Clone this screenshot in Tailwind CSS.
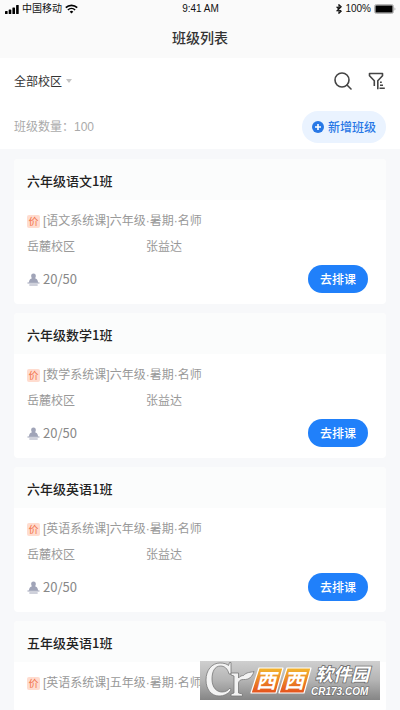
<!DOCTYPE html>
<html lang="zh-CN">
<head>
<meta charset="utf-8">
<meta name="viewport" content="width=device-width, initial-scale=1">
<title>班级列表</title>
<script src="https://cdn.jsdelivr.net/npm/@tailwindcss/browser@4"></script>
</head>
<body class="bg-white font-['Noto_Sans_CJK_SC',sans-serif] text-[#333] overflow-x-hidden">
<svg class="hidden" aria-hidden="true">
  <symbol id="seat" viewBox="0 0 14 14">
    <path d="M7 .6c1.800 0 2.700 1.300 2.500 2.900-.1 1-.5 1.700-.8 2.200 1.500.5 2.600 1.300 3.100 3.700l.3 1H1.900l.3-1c.5-2.400 1.600-3.200 3.100-3.700-.3-.5-.7-1.200-.8-2.200C4.300 1.900 5.200.6 7 .6z" fill="#a0a4b8"/>
    <path d="M.5 10.800h13M2.500 13h9" stroke="#a0a4b8" stroke-width="1.100" fill="none"/>
  </symbol>
</svg>

<header class="bg-[#fafafa]">
  <div class="grid h-[18px] grid-cols-3 items-center pl-[5px] pr-1 font-['Liberation_Sans','Noto_Sans_CJK_SC',sans-serif] text-[10px] leading-[18px] text-[#111]">
    <div class="flex items-center gap-[3px]">
      <svg class="h-[9px] w-[14px]" viewBox="0 0 14 9" fill="#000" aria-hidden="true"><rect y="6" width="2.600" height="3" rx=".6"/><rect x="3.700" y="4.500" width="2.600" height="4.500" rx=".6"/><rect x="7.400" y="2.500" width="2.600" height="6.500" rx=".6"/><rect x="11.100" width="2.600" height="9" rx=".6"/></svg>
      <span>中国移动</span>
      <svg class="h-[10px] w-[13px]" viewBox="0 0 13 10" fill="none" stroke="#000" aria-hidden="true"><path d="M.8 3.600a8.300 8.300 0 0 1 11.400 0" stroke-width="1.700"/><path d="M2.900 6a5.200 5.200 0 0 1 7.200 0" stroke-width="1.600"/><path d="M4.700 7.700a2.600 2.600 0 0 1 3.600 0L6.500 9.600z" fill="#000" stroke="none"/></svg>
    </div>
    <div class="text-center">9:41 AM</div>
    <div class="flex items-center justify-end gap-[3px]">
      <svg class="h-[10px] w-[6px]" viewBox="0 0 6 10" fill="none" stroke="#111" stroke-width="1.200" aria-hidden="true"><path d="M.6 2.700l4.600 4.500L3 9.200V.8l2.200 2L.6 7.300"/></svg>
      <span>100%</span>
      <svg class="h-[10px] w-[22px]" viewBox="0 0 22 10" aria-hidden="true"><rect x=".5" y=".5" width="19" height="9" rx="2" fill="#ddd" stroke="#b5b5b5"/><rect x="1.500" y="1.500" width="17" height="7" rx=".5" fill="#000"/><path d="M20.500 3.500c1.200.5 1.200 2.500 0 3z" fill="#aaa"/></svg>
    </div>
  </div>
  <h1 class="h-10 text-center text-[14px] font-medium leading-[38px]">班级列表</h1>
</header>

<section class="px-[14px]">
  <div class="flex h-[46px] items-center justify-between">
    <button type="button" class="flex items-center gap-1 text-[12px]">全部校区
      <svg class="h-1 w-[6px]" viewBox="0 0 6 4" aria-hidden="true"><path d="M0 0h6L3 4z" fill="#c4c4c4"/></svg>
    </button>
    <div class="flex items-center gap-4">
      <button type="button" aria-label="搜索"><svg class="size-[18px]" viewBox="0 0 18 18" fill="none" stroke="#444" stroke-width="1.600" stroke-linecap="round"><circle cx="8" cy="8" r="7"/><path d="M13 13l4 4"/></svg></button>
      <button type="button" aria-label="筛选"><svg class="size-[18px]" viewBox="0 0 18 18" fill="none" stroke="#444" stroke-width="1.600" stroke-linejoin="round"><path d="M6.300 14V8.800L1.500 3.700V1.500h13v2.200L9.800 8.800v8.400M12 10.300h1.800M12 13.200h3M11.500 16.300h5.300"/></svg></button>
    </div>
  </div>
  <div class="flex h-[45px] items-center justify-between">
    <p class="font-['Liberation_Sans','Noto_Sans_CJK_SC',sans-serif] text-[12px] text-[#aaa]">班级数量：100</p>
    <button type="button" class="flex h-8 items-center gap-1 rounded-full bg-[#eaf3ff] px-[10px] text-[12px] font-medium text-[#2878e6]">
      <svg class="size-3" viewBox="0 0 12 12" aria-hidden="true"><circle cx="6" cy="6" r="6" fill="#2878e6"/><path d="M6 3v6M3 6h6" stroke="#fff" stroke-width="1.600"/></svg>新增班级
    </button>
  </div>
</section>

<main class="h-[calc(100vh-149px)] overflow-hidden bg-[#f7f8fa] px-[14px] pt-[10px]">
  <div class="flex flex-col gap-[9px]">
    <article class="overflow-hidden rounded bg-white">
      <h2 class="h-[41px] bg-[#fbfcfc] px-[13px] text-[13px] font-medium leading-[44px] text-[#222]">六年级语文1班</h2>
      <div class="px-[13px] pb-[11px] pt-3 text-[12px] leading-[18px] text-[#999]">
        <p class="flex items-center gap-[3px] font-['Liberation_Sans','Noto_Sans_CJK_SC',sans-serif]"><span class="size-[13px] rounded-[2px] bg-[#ffdccf] text-center text-[10px] leading-[13px] text-[#f2734b]">价</span>[语文系统课]六年级·暑期·名师</p>
        <div class="mt-[7px] flex"><span class="w-[119px]">岳麓校区</span><span>张益达</span></div>
        <div class="mt-[10px] flex items-center justify-between"><span class="flex items-center gap-[3px] text-[13px] text-[#888]"><svg class="size-[13px]" aria-hidden="true"><use href="#seat"/></svg>20/50</span><button type="button" class="mr-[5px] h-7 rounded-full bg-[#2080fa] px-3 text-[12px] font-medium text-white">去排课</button></div>
      </div>
    </article>
    <article class="overflow-hidden rounded bg-white">
      <h2 class="h-[41px] bg-[#fbfcfc] px-[13px] text-[13px] font-medium leading-[44px] text-[#222]">六年级数学1班</h2>
      <div class="px-[13px] pb-[11px] pt-3 text-[12px] leading-[18px] text-[#999]">
        <p class="flex items-center gap-[3px] font-['Liberation_Sans','Noto_Sans_CJK_SC',sans-serif]"><span class="size-[13px] rounded-[2px] bg-[#ffdccf] text-center text-[10px] leading-[13px] text-[#f2734b]">价</span>[数学系统课]六年级·暑期·名师</p>
        <div class="mt-[7px] flex"><span class="w-[119px]">岳麓校区</span><span>张益达</span></div>
        <div class="mt-[10px] flex items-center justify-between"><span class="flex items-center gap-[3px] text-[13px] text-[#888]"><svg class="size-[13px]" aria-hidden="true"><use href="#seat"/></svg>20/50</span><button type="button" class="mr-[5px] h-7 rounded-full bg-[#2080fa] px-3 text-[12px] font-medium text-white">去排课</button></div>
      </div>
    </article>
    <article class="overflow-hidden rounded bg-white">
      <h2 class="h-[41px] bg-[#fbfcfc] px-[13px] text-[13px] font-medium leading-[44px] text-[#222]">六年级英语1班</h2>
      <div class="px-[13px] pb-[11px] pt-3 text-[12px] leading-[18px] text-[#999]">
        <p class="flex items-center gap-[3px] font-['Liberation_Sans','Noto_Sans_CJK_SC',sans-serif]"><span class="size-[13px] rounded-[2px] bg-[#ffdccf] text-center text-[10px] leading-[13px] text-[#f2734b]">价</span>[英语系统课]六年级·暑期·名师</p>
        <div class="mt-[7px] flex"><span class="w-[119px]">岳麓校区</span><span>张益达</span></div>
        <div class="mt-[10px] flex items-center justify-between"><span class="flex items-center gap-[3px] text-[13px] text-[#888]"><svg class="size-[13px]" aria-hidden="true"><use href="#seat"/></svg>20/50</span><button type="button" class="mr-[5px] h-7 rounded-full bg-[#2080fa] px-3 text-[12px] font-medium text-white">去排课</button></div>
      </div>
    </article>
    <article class="overflow-hidden rounded bg-white">
      <h2 class="h-[41px] bg-[#fbfcfc] px-[13px] text-[13px] font-medium leading-[44px] text-[#222]">五年级英语1班</h2>
      <div class="px-[13px] pb-5 pt-3 text-[12px] leading-[18px] text-[#999]">
        <p class="flex items-center gap-[3px] font-['Liberation_Sans','Noto_Sans_CJK_SC',sans-serif]"><span class="size-[13px] rounded-[2px] bg-[#ffdccf] text-center text-[10px] leading-[13px] text-[#f2734b]">价</span>[英语系统课]五年级·暑期·名师</p>
      </div>
    </article>
  </div>
</main>

<aside class="fixed bottom-[10px] right-5" aria-label="西西软件园">
  <svg class="block h-[39px] w-[180px]" viewBox="0 0 180 39">
    <defs>
      <linearGradient id="plate" x2="0" y2="1"><stop offset="0" stop-color="#cfcfcf"/><stop offset=".5" stop-color="#b4b4b4"/><stop offset="1" stop-color="#858585"/></linearGradient>
      <linearGradient id="tile" x2="0" y2="1"><stop offset="0" stop-color="#f3b730"/><stop offset="1" stop-color="#e4511d"/></linearGradient>
    </defs>
    <rect width="180" height="39" fill="url(#plate)"/>
    <g fill="#f3f3f3" stroke="#777" stroke-width=".8" stroke-linejoin="round">
      <path d="M31 1.500V13h-2C27.500 7 24 5 20.500 5 14.500 5 12 11 12 18c0 9 5 13 10 13 3.500 0 6-1.500 8-4l1 2c-3 4-7 6-12 6C11 35 6 28 6 19 6 9 12 2 20 2c4 0 7 1 8.500 2.500L29.500 1.500z"/>
      <path d="M31 12h7.500v5c1.500-2 3.500-2.500 5-2.500 3-3.500 7-3 10.500-4-1.500 5-5 8.500-10.500 8-3 0-4.500 1-5 3.500V32l4 1v2H31v-2l3-1V15l-3-1z"/>
    </g>
    <g fill="url(#tile)" stroke="#fff" stroke-width="1.200" stroke-linejoin="round"><path d="M59 7h24l-7 25H51z"/><path d="M87 7h24l-7 25H79z"/></g>
    <g font-family="'Noto Sans CJK SC',sans-serif" font-weight="700" font-style="italic" fill="#fff">
      <text x="56" y="27" font-size="20">西</text>
      <text x="84" y="27" font-size="20">西</text>
      <g font-size="18" stroke="#666" stroke-width="1.500" paint-order="stroke">
        <text x="115" y="20">软件园</text>
      </g>
      <text x="111" y="34" font-family="'Liberation Sans',sans-serif" font-size="10" stroke="#666" stroke-width="1.200" paint-order="stroke">CR173.COM</text>
    </g>
  </svg>
</aside>
</body>
</html>
